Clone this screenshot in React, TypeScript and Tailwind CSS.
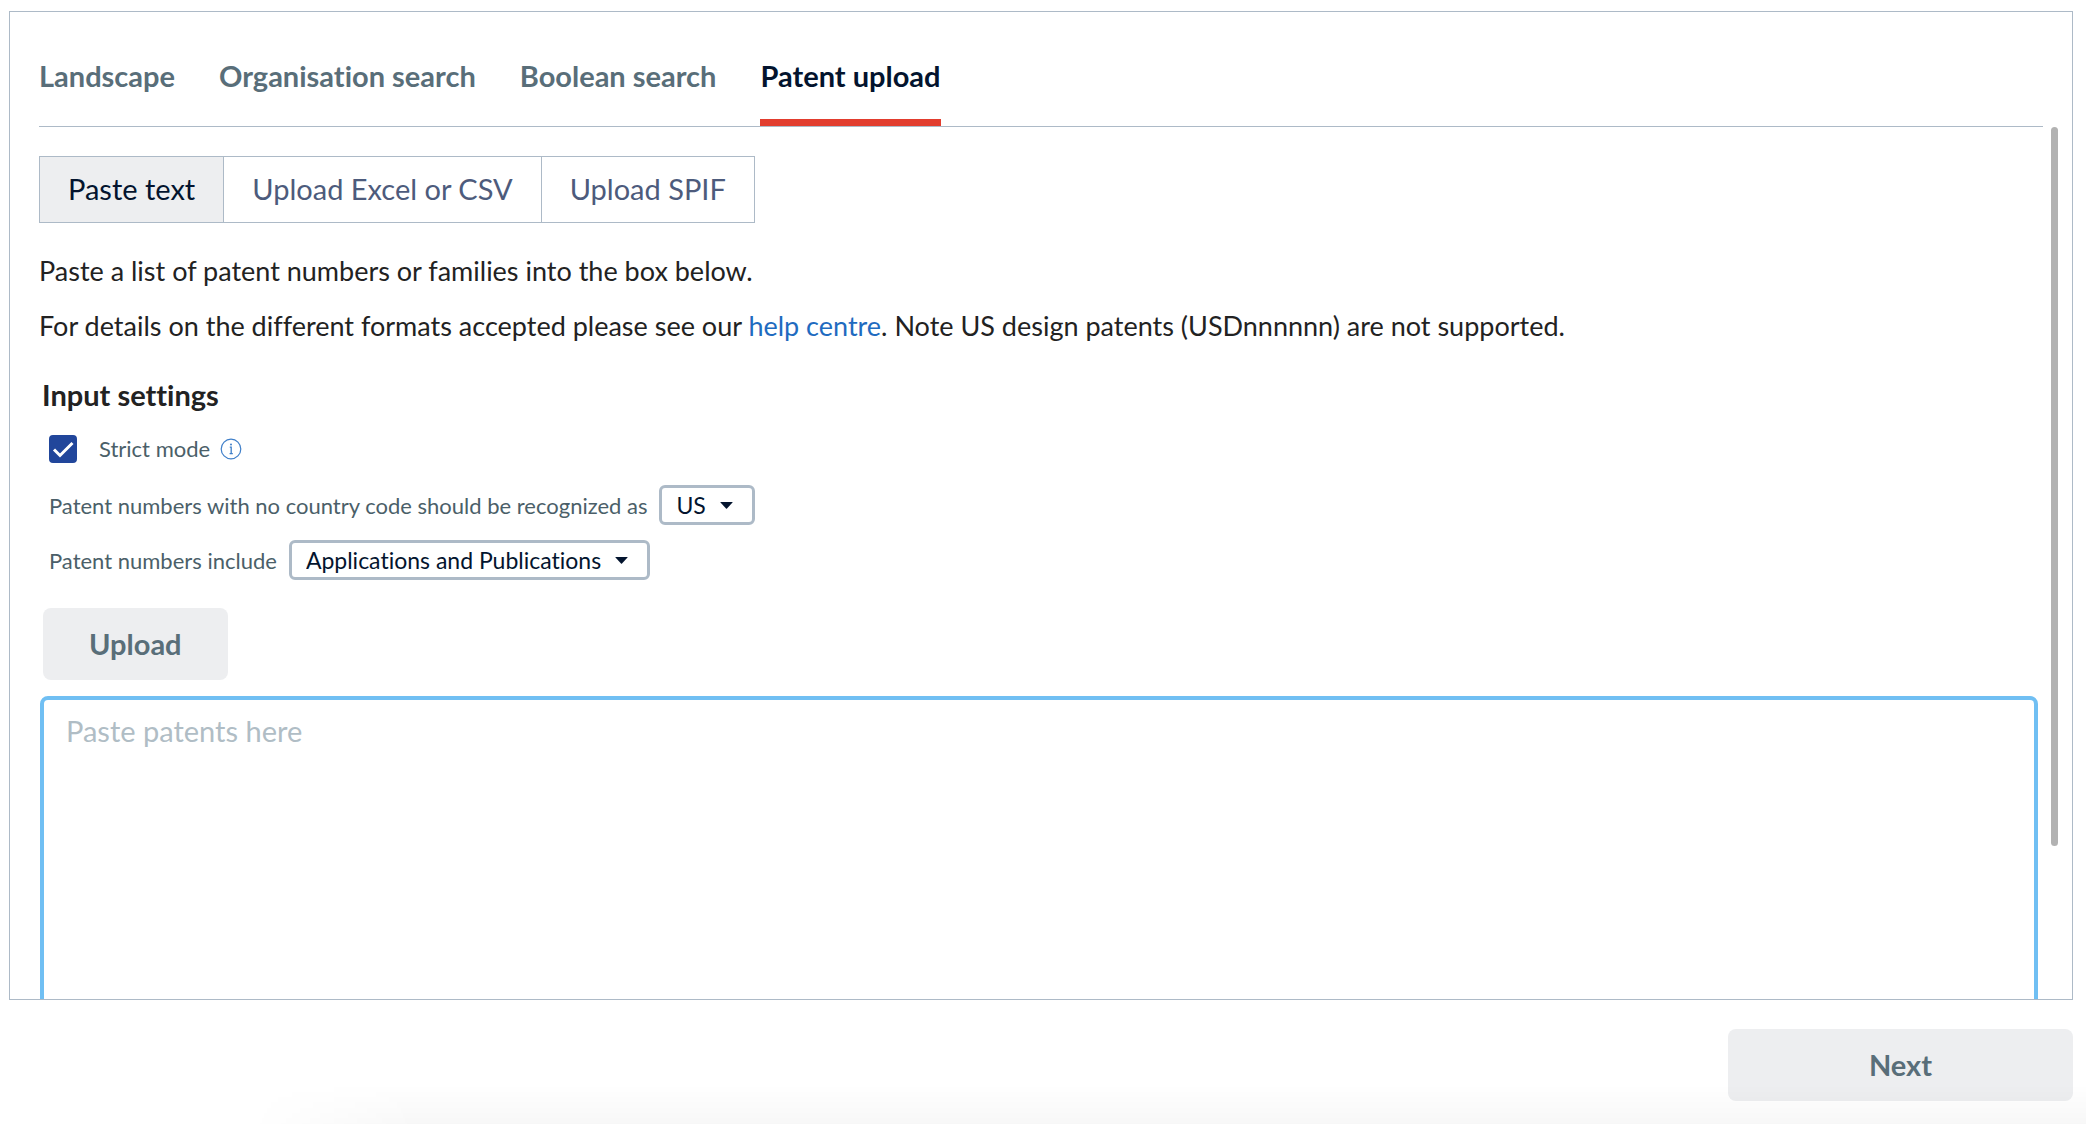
import { useState } from "react";

const tabs = ["Landscape", "Organisation search", "Boolean search", "Patent upload"];
const modes = ["Paste text", "Upload Excel or CSV", "Upload SPIF"];

interface DropdownProps {
  id: string;
  label: string;
  options: string[];
}

const Dropdown = ({ id, label, options }: DropdownProps) => {
  const [value, setValue] = useState<string>(options[0]);

  return (
    <div className="flex items-center gap-3 pl-2.5">
      <label htmlFor={id} className="text-[#4b5f69]">{label}</label>
      <div className="relative flex">
        <select
          id={id}
          value={value}
          onChange={(e) => setValue(e.target.value)}
          className="h-10 appearance-none [field-sizing:content] rounded-md border-3 border-[#adbac7] bg-white pl-3.5 pr-[46px] text-[23px] text-[#03142e]"
        >
          {options.map((option) => (
            <option key={option}>{option}</option>
          ))}
        </select>
        <svg className="pointer-events-none absolute right-[22px] top-[17px]" width="13" height="7" viewBox="0 0 13 7" fill="#03142e">
          <path d="M0.8 0h11.4q.8 0 .3.6L7 6.6q-.5.5-1 0L.5.6Q0 0 .8 0z" />
        </svg>
      </div>
    </div>
  );
};

const App = () => {
  const [activeTab, setActiveTab] = useState<string>("Patent upload");
  const [mode, setMode] = useState<string>("Paste text");
  const [strict, setStrict] = useState<boolean>(true);
  const [patents, setPatents] = useState<string>("");

  return (
    <div className="relative flex h-screen flex-col bg-white pt-[11px] pb-[23px] pl-[9px] pr-[13px] font-['Lato',sans-serif] [font-variant-ligatures:none]">
      <main className="flex min-h-0 flex-1 flex-col border border-[#adbac7]">
        <nav className="mx-[29px] flex gap-11 border-b border-[#adbac7] text-[29px] leading-10 font-bold">
          {tabs.map((tab) => (
            <button
              key={tab}
              onClick={() => setActiveTab(tab)}
              className={
                tab === activeTab
                  ? "border-b-7 border-[#e23d2e] pt-11 pb-[23px] text-[#03142e]"
                  : "border-b-7 border-transparent pt-11 pb-[23px] text-[#596e79]"
              }
            >
              {tab}
            </button>
          ))}
        </nav>

        <div className="flex min-h-0 flex-1 pr-3.5">
          <div className="min-w-0 flex-1 overflow-hidden pl-[29px] pr-2">
            <div className="mt-[29px] flex w-max divide-x divide-[#adbac7] border border-[#adbac7] text-[29px]">
              {modes.map((item) => (
                <button
                  key={item}
                  onClick={() => setMode(item)}
                  className={
                    item === mode
                      ? "h-[65px] bg-[#edeef0] px-7 pb-0.5 text-[#03142e]"
                      : "h-[65px] px-7 pb-0.5 text-[#4d5b7c]"
                  }
                >
                  {item}
                </button>
              ))}
            </div>

            <div className="mt-[27px] flex flex-col gap-[13px] text-[27px] leading-[42px] text-[#222222]">
              <p>Paste a list of patent numbers or families into the box below.</p>
              <p>
                For details on the different formats accepted please see our{" "}
                <a href="#help" className="text-[#1f6bc0]">help centre</a>. Note US design patents (USDnnnnnn) are not supported.
              </p>
            </div>

            <h2 className="mt-7 pl-[3px] text-[29px] leading-10 font-bold text-[#222222]">Input settings</h2>

            <div className="mt-[13px] flex flex-col gap-[15px] text-[22px]">
              <div className="flex h-[42px] items-center pl-2.5">
                <div className="relative flex">
                  <input
                    id="strict"
                    type="checkbox"
                    checked={strict}
                    onChange={() => setStrict((prev) => !prev)}
                    className="size-7 appearance-none rounded-sm border-2 border-[#21469b] checked:bg-[#21469b]"
                  />
                  {strict && (
                    <svg className="pointer-events-none absolute inset-0" width="28" height="28" viewBox="0 0 28 28" fill="none" stroke="#fff" strokeWidth="3">
                      <path d="M5 14.5l6 6L23.500 8" />
                    </svg>
                  )}
                </div>
                <label htmlFor="strict" className="ml-[22px] pb-0.5 text-[#4b5f69]">Strict mode</label>
                <svg className="ml-2.5" width="22" height="22" viewBox="0 0 22 22" fill="none" stroke="#3f7fc9">
                  <circle cx="11" cy="11" r="9.8" strokeWidth="1.2" />
                  <path d="M9.800 9.200h1.400V15.500M9.600 15.600h3.200" strokeWidth="1.300" />
                  <circle cx="11" cy="6.500" r="1" fill="#3f7fc9" stroke="none" />
                </svg>
              </div>
              <Dropdown
                id="country"
                label="Patent numbers with no country code should be recognized as"
                options={["US"]}
              />
              <Dropdown id="include" label="Patent numbers include" options={["Applications and Publications"]} />
            </div>

            <button className="mt-7 ml-1 block h-[72px] rounded-lg bg-[#edeef0] px-[46px] text-[29px] font-bold text-[#596e79]">
              Upload
            </button>

            <textarea
              aria-label="Patents"
              value={patents}
              onChange={(e) => setPatents(e.target.value)}
              placeholder="Paste patents here"
              className="mt-4 ml-px block h-[480px] w-[calc(100%-6px)] resize-none rounded-lg border-4 border-[#70bff3] px-[22px] py-[11px] text-[29px] leading-10 outline-none placeholder:text-[#b0bdc5]"
            />
          </div>
          <div className="w-[7px]">
            <div className="h-[82.5%] rounded-full bg-[#b2b2b2]" />
          </div>
        </div>
      </main>

      <footer className="mt-[29px] flex justify-end">
        <button className="h-[72px] w-[345px] rounded-lg bg-[#edeef0] text-[29px] font-bold text-[#596e79]">Next</button>
      </footer>
      <div className="pointer-events-none absolute inset-x-0 bottom-0 h-10 bg-linear-to-t from-black/3 to-transparent [mask-image:linear-gradient(to_right,transparent_12%,black_20%)]" />
    </div>
  );
};

export default App;
